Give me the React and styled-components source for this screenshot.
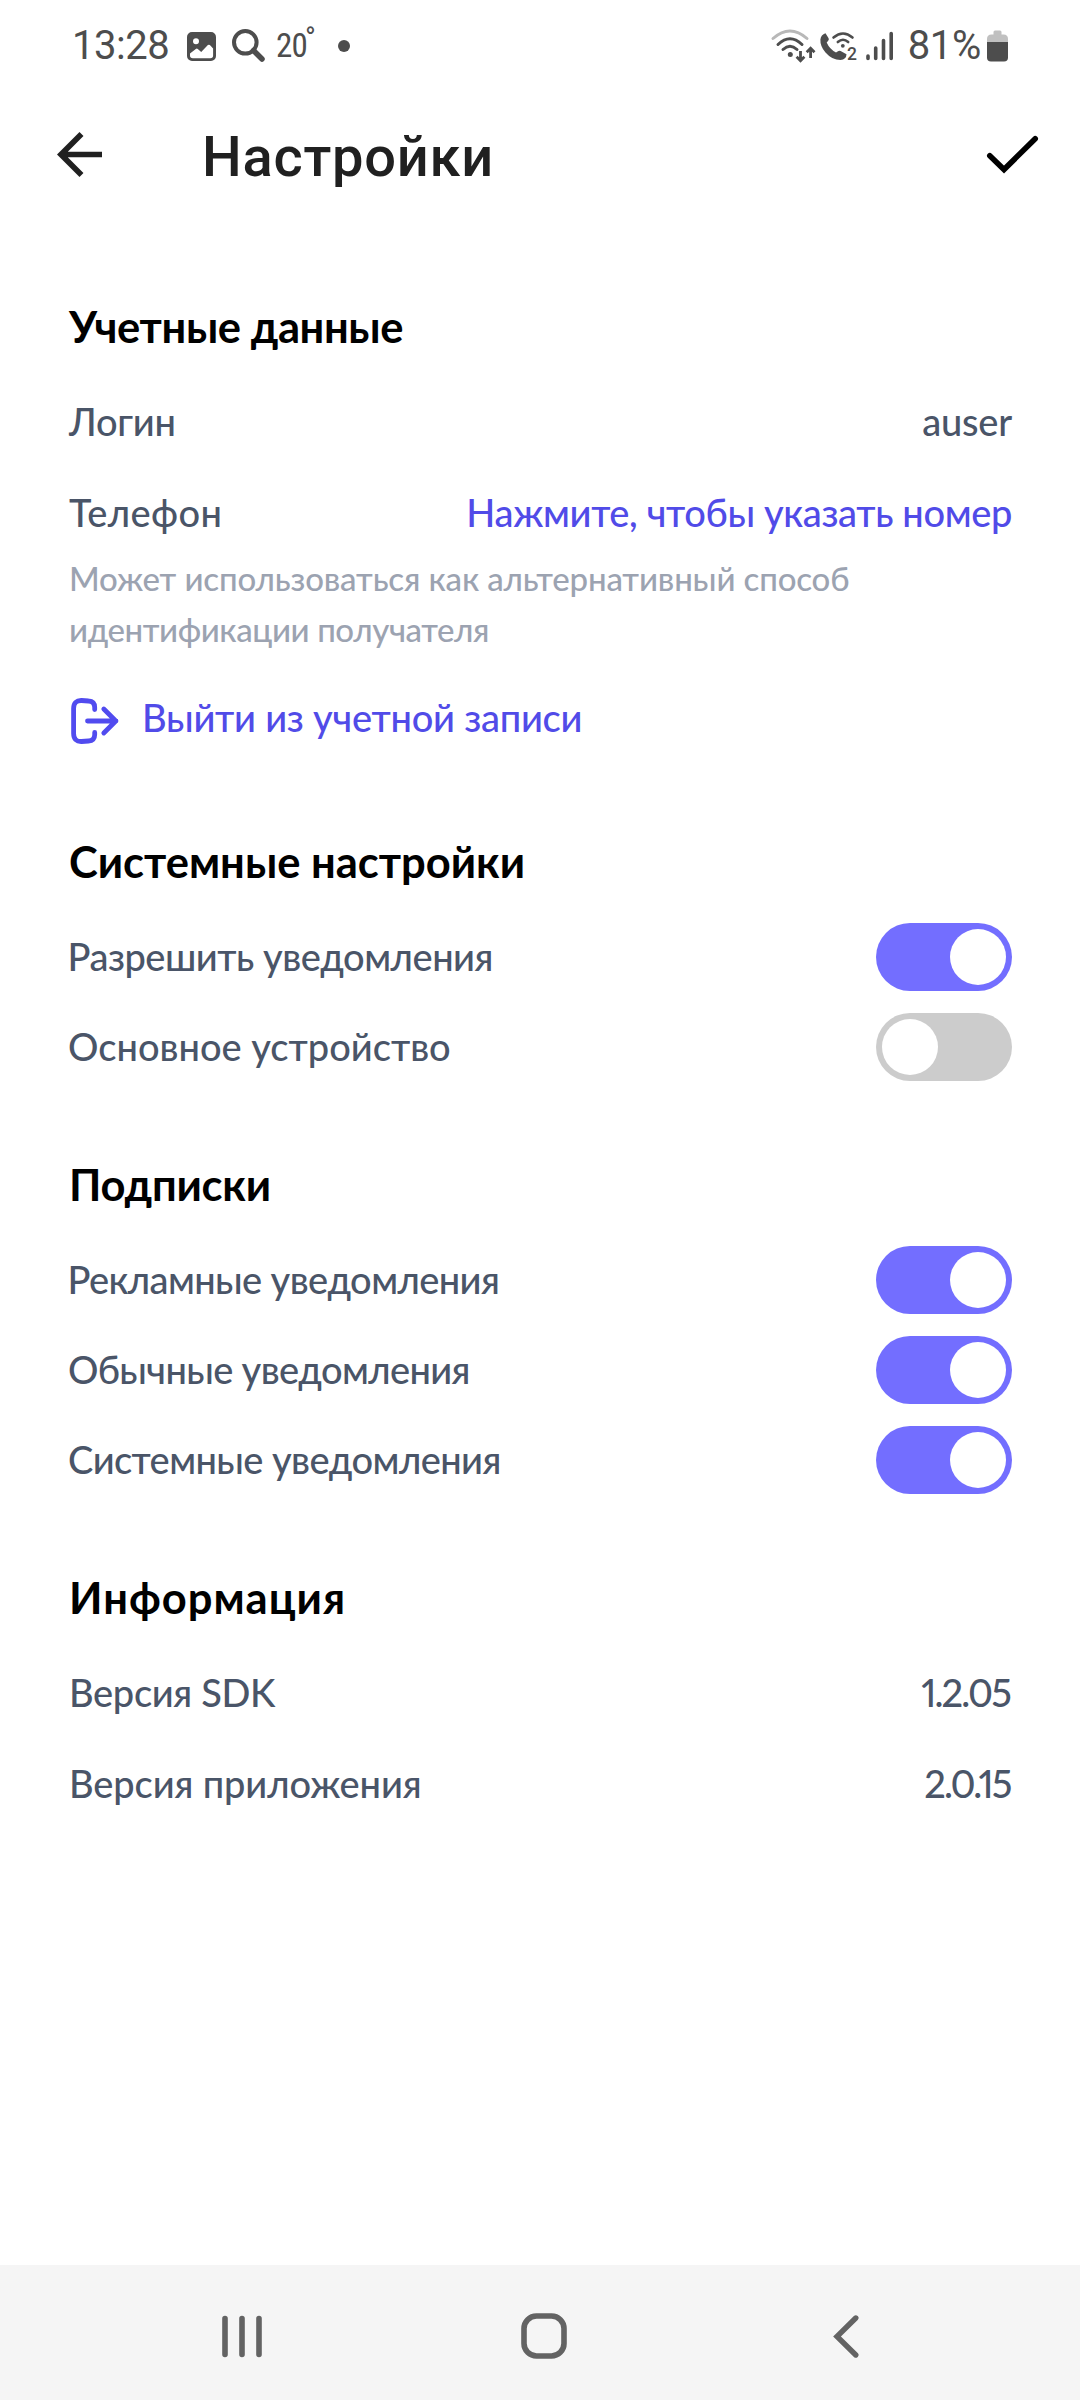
import React, { useState } from 'react';
import styled, { createGlobalStyle } from 'styled-components';

const GlobalStyle = createGlobalStyle`
  * { box-sizing: border-box; }
  body { margin: 0; background: #fff; }
`;

const Screen = styled.div`
  width: 1080px;
  height: 2400px;
  display: flex;
  flex-direction: column;
  background: #fff;
  overflow: hidden;
  font-family: Lato, 'Open Sans', sans-serif;
`;

/* ---------- status bar ---------- */

const StatusBar = styled.div`
  height: 88px;
  padding: 4px 72px 0 72px;
  display: flex;
  align-items: center;
  justify-content: space-between;
  color: #4d4d4d;
  font-family: Roboto, sans-serif;
`;

const StatusGroup = styled.div`
  display: flex;
  align-items: center;
`;

const StatusText = styled.span`
  margin-left: ${p => p.$left || 0}px;
  font-size: 40px;
  line-height: 48px;
  letter-spacing: ${p => p.$spacing || 0}px;
`;

const Temperature = styled.span`
  display: flex;
  margin-left: 10px;
  font-family: 'Roboto Condensed', Roboto, sans-serif;
  font-size: 33px;
  line-height: 40px;
  letter-spacing: -0.8px;
`;

const Degree = styled.span`
  width: 9px;
  font-size: 29px;
  line-height: 24px;
  margin-left: -2px;
`;

const Dot = styled.span`
  width: 12px;
  height: 12px;
  margin-left: 24px;
  border-radius: 50%;
  background: #4d4d4d;
`;

const Glyph = styled.svg`
  display: block;
  flex: none;
  margin-left: ${p => p.$left || 0}px;
  overflow: visible;
`;

/* ---------- header ---------- */

const Header = styled.header`
  height: 132px;
  padding: 0 42px 0 57px;
  display: flex;
  align-items: center;
`;

const IconButton = styled.button`
  display: flex;
  padding: 0;
  border: 0;
  background: none;
  cursor: pointer;
`;

const Title = styled.h1`
  flex: 1;
  margin: 0 0 0 100px;
  padding-top: 5px;
  font: 500 56px/66px Roboto, sans-serif;
  letter-spacing: 0.75px;
  color: #202020;
`;

/* ---------- content ---------- */

const Content = styled.main`
  flex: 1;
  padding: 75px 68px 0 69px;
  display: flex;
  flex-direction: column;
  gap: 61px;
`;

const Section = styled.section`
  display: flex;
  flex-direction: column;
`;

const Heading = styled.h2`
  margin: 0 0 ${p => p.$gap}px;
  padding-top: 1px;
  font-size: 43.5px;
  line-height: 60px;
  font-weight: 700;
  letter-spacing: ${p => p.$spacing || 0}px;
  color: #000;
`;

const Row = styled.div`
  height: ${p => (p.$compact ? 90 : 91)}px;
  display: flex;
  align-items: center;
  justify-content: space-between;
`;

const Label = styled.span`
  margin-left: ${p => p.$shift || 0}px;
  padding-bottom: ${p => p.$lift || 0}px;
  font-size: 38px;
  line-height: 46px;
  font-weight: 500;
  letter-spacing: ${p => p.$spacing || 0}px;
  color: #4a5568;
  white-space: nowrap;
`;

const Value = styled(Label)`
  margin-right: ${p => p.$end || 0}px;
  font-variant-numeric: proportional-nums lining-nums;
`;

const LinkButton = styled.button`
  padding: 0;
  border: 0;
  background: none;
  font: 500 38px/46px Lato, sans-serif;
  letter-spacing: -0.36px;
  color: #514be8;
  cursor: pointer;
`;

const Hint = styled.p`
  margin: -4px 0 0;
  font-size: 33px;
  line-height: 51px;
  font-weight: 500;
  color: #9ca3b1;
`;

const HintLine = styled.span`
  display: block;
  letter-spacing: ${p => p.$spacing}px;
`;

const Logout = styled.button`
  height: 91px;
  margin: 20px 0 3px;
  padding: 0 0 0 2px;
  border: 0;
  display: flex;
  align-items: center;
  gap: 22px;
  background: none;
  cursor: pointer;
`;

const LogoutText = styled.span`
  padding-bottom: 8px;
  font: 500 38px/46px Lato, sans-serif;
  letter-spacing: -0.25px;
  color: #514be8;
`;

const Track = styled.button`
  width: 136px;
  height: 68px;
  padding: 6px;
  border: 0;
  border-radius: 34px;
  display: flex;
  justify-content: ${p => (p.$on ? 'flex-end' : 'flex-start')};
  background: ${p => (p.$on ? '#736eff' : '#cccccc')};
  cursor: pointer;
`;

const Knob = styled.span`
  width: 56px;
  height: 56px;
  border-radius: 50%;
  background: #fff;
`;

/* ---------- navigation bar ---------- */

const NavBar = styled.nav`
  height: 135px;
  padding: 7px 221px 0 222px;
  display: flex;
  align-items: center;
  justify-content: space-between;
  background: #f5f5f5;
`;

function SwitchRow({ label, initial, spacing, shift }) {
  const [on, setOn] = useState(initial);
  return (
    <Row $compact>
      <Label $lift={3} $spacing={spacing} $shift={shift}>{label}</Label>
      <Track $on={on} role="switch" aria-checked={on} onClick={() => setOn(!on)}>
        <Knob />
      </Track>
    </Row>
  );
}

function ImageIcon() {
  return (
    <Glyph $left={18} width="29" height="29" viewBox="0 0 29 29">
      <path
        fillRule="evenodd"
        fill="#4d4d4d"
        d="M5 0h19a5 5 0 0 1 5 5v19a5 5 0 0 1-5 5H5a5 5 0 0 1-5-5V5a5 5 0 0 1 5-5ZM9 6.2a3 3 0 1 0 0 6 3 3 0 0 0 0-6ZM3 21.5v2Q3 26.3 5.8 26.3h17.5q2.8 0 2.8-2.8V16.500l-3.200-3.400q-1-.9-2 0L14.200 20l-3.400-3q-1-.8-2 0Z"
      />
    </Glyph>
  );
}

function SearchIcon() {
  return (
    <Glyph $left={16} width="34" height="34" viewBox="0 0 34 34" fill="none" stroke="#4d4d4d">
      <circle cx="13.3" cy="13.3" r="11.3" strokeWidth="4" />
      <path d="M21.500 21.500 30 30" strokeWidth="5.5" strokeLinecap="round" />
    </Glyph>
  );
}

function WifiIcon() {
  return (
    <Glyph width="46" height="34" viewBox="0 0 46 34" fill="none" strokeWidth="3" strokeLinecap="round" stroke="#4d4d4d">
      <path d="M2 9.500Q19 -5.500 36 9.500" stroke="#b8b8b8" />
      <path d="M7 15.500Q19 4 31 15.500M12 20.500Q19 14 26 20.500" />
      <circle cx="19.3" cy="25.5" r="2.5" fill="#4d4d4d" stroke="none" />
      <path d="M29.500 22v8.500M25.600 27.800l3.900 3.900 3.900-3.900M39.600 29v-8.500M35.700 23.200l3.900-3.900 3.900 3.900" strokeWidth="2.8" strokeLinecap="butt" />
    </Glyph>
  );
}

function CallIcon() {
  return (
    <Glyph $left={3} width="38" height="34" viewBox="0 0 38 34">
      <path
        fill="#4d4d4d"
        d="M5.500 4.200 8.600 9.300Q9.300 10.800 8 12L6.700 13.600Q9.500 20.200 16 23.600L18 22.200Q19.200 21.300 20.600 22L26.500 25.300Q26.300 30.600 20.500 31.100 12 31 5.500 23.500 0 17 .4 10.400 1 5.500 5.500 4.200Z"
      />
      <g fill="none" stroke="#4d4d4d" strokeWidth="2.6" strokeLinecap="round">
        <path d="M13.500 8.500Q23 .5 32.500 8.500M17.800 13Q23 8.500 28.200 13" />
      </g>
      <circle cx="22.8" cy="16.8" r="1.9" fill="#4d4d4d" />
      <text x="27" y="31" fontFamily="Roboto, sans-serif" fontSize="17.5" fontWeight="500" fill="#4d4d4d">2</text>
    </Glyph>
  );
}

function SignalIcon() {
  return (
    <Glyph $left={8} width="28" height="30" viewBox="0 0 28 30" stroke="#4d4d4d" strokeWidth="3.6" strokeLinecap="round">
      <path d="M2 25v2.500M9.700 17v10.500M17.500 9.500v18M25.200 2.500v25" />
    </Glyph>
  );
}

function BatteryIcon() {
  return (
    <Glyph $left={6} width="21" height="32" viewBox="0 0 21 32">
      <path fill="#c0c0c0" d="M6.500 4.500V2Q6.500 .5 8 .5h5q1.500 0 1.500 1.500v2.500h2q4.500 0 4.500 4.500v3H0V9Q0 4.500 4.500 4.500Z" />
      <path fill="#4d4d4d" d="M0 12h21v15.500q0 4-4 4H4q-4 0-4-4Z" />
    </Glyph>
  );
}

function LogoutIcon() {
  return (
    <Glyph
      width="49"
      height="46"
      viewBox="0 0 49 46"
      fill="none"
      stroke="#514bef"
      strokeWidth="4.8"
      strokeLinecap="round"
      strokeLinejoin="round"
    >
      <path d="M23.700 11.500V9.500Q23.700 3.300 17.500 3L10.500 2.500Q2.700 2.300 2.600 10.500V35.500Q2.700 43.700 10.500 43.500L17.500 43Q23.700 42.700 23.700 36.500V34.500" />
      <path d="M16.500 23H45M32.800 11 44.800 23 32.800 35" />
    </Glyph>
  );
}

function RecentsIcon() {
  return (
    <Glyph width="41" height="43" viewBox="0 0 41 43" stroke="#636363" strokeWidth="5.6" strokeLinecap="round">
      <path d="M3 3.500v36M20 3.500v36M37 3.500v36" />
    </Glyph>
  );
}

function HomeIcon() {
  return (
    <Glyph $left={-8} width="46" height="46" viewBox="0 0 46 46" fill="none" stroke="#636363" strokeWidth="5.6">
      <rect x="3" y="3" width="40" height="40" rx="12.5" />
    </Glyph>
  );
}

function BackIcon() {
  return (
    <Glyph width="26" height="43" viewBox="0 0 26 43" fill="none" stroke="#636363" strokeWidth="5.4" strokeLinecap="round">
      <path d="M22.800 3 4 21.500 22.800 40" />
    </Glyph>
  );
}

export default function App() {
  return (
    <>
      <GlobalStyle />
      <Screen>
        <StatusBar>
          <StatusGroup>
            <StatusText $spacing={-0.5}>13:28</StatusText>
            <ImageIcon />
            <SearchIcon />
            <Temperature>
              20<Degree>°</Degree>
            </Temperature>
            <Dot />
          </StatusGroup>
          <StatusGroup>
            <WifiIcon />
            <CallIcon />
            <SignalIcon />
            <StatusText $left={14} $spacing={-0.3}>81%</StatusText>
            <BatteryIcon />
          </StatusGroup>
        </StatusBar>

        <Header>
          <IconButton aria-label="Назад">
            <Glyph width="45" height="45" viewBox="4 4 16 16">
              <path fill="#202020" d="M20 11H7.830l5.590-5.590L12 4l-8 8 8 8 1.410-1.410L7.830 13H20v-2z" />
            </Glyph>
          </IconButton>
          <Title>Настройки</Title>
          <IconButton aria-label="Готово">
            <Glyph width="51" height="37" viewBox="0 0 51 37" fill="none" stroke="#000" strokeWidth="5.6" strokeLinecap="round">
              <path d="M2.800 19.800 17 33.500 48.200 2.800" />
            </Glyph>
          </IconButton>
        </Header>

        <Content>
          <Section>
            <Heading $gap={19} $spacing={-0.4}>Учетные данные</Heading>
            <Row>
              <Label $spacing={-0.25}>Логин</Label>
              <Value $spacing={-0.2}>auser</Value>
            </Row>
            <Row>
              <Label $spacing={0.38}>Телефон</Label>
              <LinkButton>Нажмите, чтобы указать номер</LinkButton>
            </Row>
            <Hint>
              <HintLine $spacing={-0.15}>Может использоваться как альтернативный способ</HintLine>
              <HintLine $spacing={-0.42}>идентификации получателя</HintLine>
            </Hint>
            <Logout>
              <LogoutIcon />
              <LogoutText>Выйти из учетной записи</LogoutText>
            </Logout>
          </Section>

          <Section>
            <Heading $gap={21}>Системные настройки</Heading>
            <SwitchRow label="Разрешить уведомления" initial={true} spacing={-0.48} shift={-1.5} />
            <SwitchRow label="Основное устройство" initial={false} spacing={0} shift={-1} />
          </Section>

          <Section>
            <Heading $gap={21} $spacing={-0.25}>Подписки</Heading>
            <SwitchRow label="Рекламные уведомления" initial={true} spacing={-0.6} shift={-1.5} />
            <SwitchRow label="Обычные уведомления" initial={true} spacing={-0.64} shift={-1} />
            <SwitchRow label="Системные уведомления" initial={true} spacing={-0.58} shift={-1} />
          </Section>

          <Section>
            <Heading $gap={19} $spacing={1}>Информация</Heading>
            <Row>
              <Label $spacing={-0.33}>Версия SDK</Label>
              <Value $spacing={-1.9} $end={2}>1.2.05</Value>
            </Row>
            <Row>
              <Label $spacing={-0.1}>Версия приложения</Label>
              <Value $spacing={-2} $end={1.5}>2.0.15</Value>
            </Row>
          </Section>
        </Content>

        <NavBar>
          <RecentsIcon />
          <HomeIcon />
          <BackIcon />
        </NavBar>
      </Screen>
    </>
  );
}
